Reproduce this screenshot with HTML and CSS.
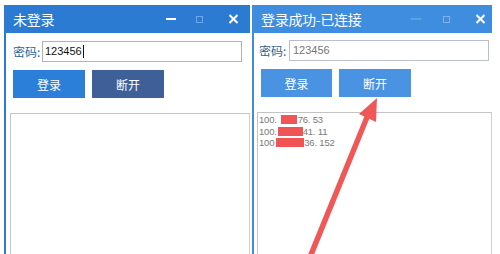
FILE: index.html
```html
<!DOCTYPE html>
<html lang="zh-CN">
<head>
    <meta charset="UTF-8">
    <title>登录</title>
    <link rel="stylesheet" href="styles.css">
</head>
<body>
    <div class="desk">
        <div class="window win-left">
            <div class="title-bar">
                <span class="title">未登录</span>
                <svg class="ctl ctl-min" width="10" height="10" viewBox="0 0 10 10"><rect x="0" y="4" width="10" height="2" fill="#fff"/></svg>
                <svg class="ctl ctl-max" width="7" height="10" viewBox="0 0 7 10"><rect x="0.5" y="2.5" width="6" height="6" fill="none" stroke="#6fa8e6"/></svg>
                <svg class="ctl ctl-close" width="9" height="10" viewBox="0 0 9 10"><path d="M0.5 1 L8.5 9 M8.5 1 L0.5 9" stroke="#fff" stroke-width="2"/></svg>
            </div>
            <div class="form-row">
                <label class="pwd-label">密码:</label>
                <div class="pwd-input">123456<span class="caret"></span></div>
            </div>
            <div class="btn-row">
                <button class="btn btn-login">登录</button>
                <button class="btn btn-dark">断开</button>
            </div>
            <div class="log-box"></div>
        </div>

        <div class="window win-right">
            <div class="title-bar">
                <span class="title">登录成功-已连接</span>
                <svg class="ctl ctl-min" width="10" height="10" viewBox="0 0 10 10"><rect x="0" y="4.5" width="10" height="1" fill="#7db3ea"/></svg>
                <svg class="ctl ctl-max" width="7" height="10" viewBox="0 0 7 10"><rect x="0.5" y="2.5" width="6" height="6" fill="none" stroke="#7db3ea"/></svg>
                <svg class="ctl ctl-close" width="9" height="10" viewBox="0 0 9 10"><path d="M0.5 1 L8.5 9 M8.5 1 L0.5 9" stroke="#fff" stroke-width="2"/></svg>
            </div>
            <div class="form-row">
                <label class="pwd-label">密码:</label>
                <div class="pwd-input">123456</div>
            </div>
            <div class="btn-row">
                <button class="btn btn-light">登录</button>
                <button class="btn btn-light btn-wide">断开</button>
            </div>
            <div class="log-box">
                <div class="log-line">100.<span class="mask m1"></span>76. 53</div>
                <div class="log-line">100.<span class="mask m2"></span>41. 11</div>
                <div class="log-line">100<span class="mask m3"></span>36. 152</div>
            </div>
        </div>
    </div>

    <svg class="arrow" width="500" height="254" viewBox="0 0 500 254">
        <polygon points="305,262 311,262 370,117 365,115" fill="#f05858"/>
        <polygon points="377,98 359,114 376,122" fill="#f05858"/>
    </svg>
</body>
</html>
```

FILE: styles.css
```css
body {
    margin: 0;
    padding: 0;
    background: #fff;
    font-family: "Noto Sans CJK SC", "Liberation Sans", sans-serif;
    width: 500px;
    height: 254px;
    overflow: hidden;
    position: relative;
}
.desk {
    display: flex;
    gap: 2px;
    padding: 5px 0 0 4px;
}
.window {
    display: flex;
    flex-direction: column;
}
.win-left {
    width: 244px;
    border-left: 2px solid #2b7bd2;
}
.win-right {
    width: 238px;
    border-left: 2px solid #3f8ddf;
}
.title-bar {
    height: 28px;
    display: flex;
    align-items: center;
    color: #fff;
}
.win-left .title-bar {
    background: #2b7bd2;
    padding: 0 12px 0 7px;
}
.win-right .title-bar {
    background: #3f8ddf;
    padding: 0 7px 0 7px;
}
.title {
    flex: 1;
    font-size: 14px;
    letter-spacing: -0.3px;
}
.ctl {
    display: block;
}
.ctl-max {
    margin-left: 20px;
}
.ctl-close {
    margin-left: 26px;
}
.win-right .ctl-max {
    margin-left: 22px;
}
.form-row {
    display: flex;
    align-items: center;
}
.win-left .form-row {
    margin-top: 8px;
    padding-left: 7px;
}
.win-right .form-row {
    margin-top: 7px;
    padding-left: 5px;
}
.pwd-label {
    width: 29px;
    font-size: 12px;
    color: #2f5f94;
    white-space: nowrap;
}
.win-right .pwd-label {
    width: 30px;
    color: #3a5f88;
}
.pwd-input {
    width: 200px;
    height: 21px;
    box-sizing: border-box;
    border: 1px solid #aab4c0;
    font-family: "Liberation Sans", sans-serif;
    font-size: 11px;
    line-height: 19px;
    padding-left: 2px;
    color: #111;
    display: flex;
    align-items: center;
}
.win-right .pwd-input {
    color: #777;
    border-color: #b8c0c8;
    padding-left: 3px;
}
.caret {
    display: inline-block;
    width: 1px;
    height: 13px;
    background: #111;
    margin-left: 1px;
}
.btn-row {
    display: flex;
    gap: 7px;
    margin-top: 8px;
    padding-left: 7px;
}
.btn {
    width: 72px;
    height: 28px;
    border: none;
    color: #fff;
    font-family: "Noto Sans CJK SC", sans-serif;
    font-size: 12px;
    padding: 0;
}
.btn-login {
    background: #2b7fd8;
}
.btn-dark {
    background: #3f5f98;
}
.btn-light {
    background: #4a93e2;
    width: 71px;
}
.btn-light.btn-wide {
    width: 72px;
}
.log-box {
    box-sizing: border-box;
    border: 1px solid #c4c4c4;
    border-bottom: none;
    border-right-color: #d0d0d0;
}
.win-left .log-box {
    margin: 15px 0 0 4px;
    width: 240px;
    height: 141px;
}
.win-right .log-box {
    margin: 15px 0 0 3px;
    width: 235px;
    height: 142px;
    padding: 1px 0 0 1px;
}
.log-line {
    font-family: "Liberation Sans", sans-serif;
    font-size: 9.5px;
    letter-spacing: -0.2px;
    line-height: 11.5px;
    color: #7a7a7a;
    white-space: nowrap;
    display: flex;
    align-items: center;
}
.mask {
    display: inline-block;
    height: 9px;
    background: #f05454;
}
.m1 {
    width: 16px;
    margin: 0 1px 0 4px;
}
.m2 {
    width: 25px;
    margin: 0 0 0 1px;
}
.m3 {
    width: 28px;
    margin: 0 0 0 2px;
}
.arrow {
    position: absolute;
    left: 0;
    top: 0;
    pointer-events: none;
}
```
